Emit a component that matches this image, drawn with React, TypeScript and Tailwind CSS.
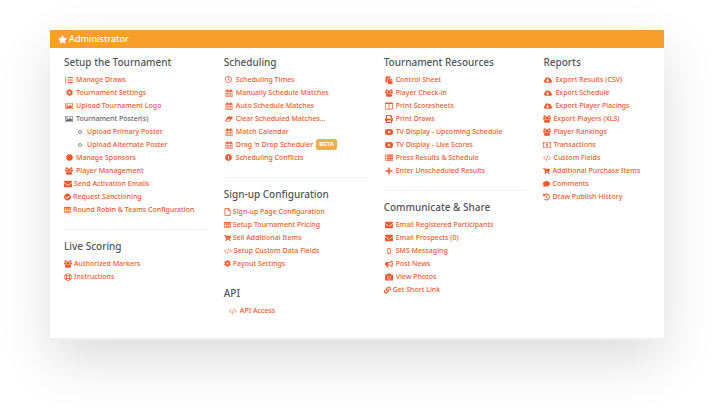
import type { ReactNode } from "react";
import {
  FaBullhorn,
  FaCamera,
  FaCertificate,
  FaCheckCircle,
  FaCloudDownloadAlt,
  FaCog,
  FaComment,
  FaEraser,
  FaExclamationCircle,
  FaHistory,
  FaLink,
  FaListOl,
  FaPaste,
  FaPlus,
  FaPrint,
  FaRegClock,
  FaRegFile,
  FaRegLifeRing,
  FaShoppingCart,
  FaStar,
} from "react-icons/fa";

function Glyph({ box, children }: { box: string; children: ReactNode }) {
  return (
    <svg viewBox={box} width="1em" height="1em" fill="currentColor" fillRule="evenodd" aria-hidden="true">
      {children}
    </svg>
  );
}

const Users = () => (
  <Glyph box="0 0 1920 1792">
    <path d="M593 896q-162 5-265 128h-134q-82 0-138-40.500t-56-118.500q0-353 124-353 6 0 43.500 21t97.500 42.500 119 21.500q67 0 133-23-5 37-5 66 0 139 81 256zM1664 1533q0 120-73 189.500t-194 69.500h-874q-121 0-194-69.500t-73-189.500q0-53 3.500-103.500t14-109 26.500-108.500 43-97.500 62-81 85.500-53.500 111.500-20q10 0 43 21.500t73 48 107 48 135 21.500 135-21.500 107-48 73-48 43-21.500q61 0 111.500 20t85.500 53.500 62 81 43 97.500 26.500 108.500 14 109 3.500 103.500zM640 256q0 106-75 181t-181 75-181-75-75-181 75-181 181-75 181 75 75 181zM1344 640q0 159-112.500 271.500t-271.500 112.500-271.500-112.500-112.500-271.500 112.500-271.500 271.500-112.500 271.500 112.500 112.500 271.500zM1920 865q0 78-56 118.500t-138 40.500h-134q-103-123-265-128 81-117 81-256 0-29-5-66 66 23 133 23 59 0 119-21.500t97.500-42.500 43.500-21q124 0 124 353zM1792 256q0 106-75 181t-181 75-181-75-75-181 75-181 181-75 181 75 75 181z" />
  </Glyph>
);

const Code = () => (
  <Glyph box="0 64 1920 1792">
    <path d="M617 1399l-50 50q-10 10-23 10t-23-10l-466-466q-10-10-10-23t10-23l466-466q10-10 23-10t23 10l50 50q10 10 10 23t-10 23l-393 393 393 393q10 10 10 23t-10 23zM1176 454l-373 1291q-4 13-15.500 19.500t-23.500 2.500l-62-17q-13-4-19.500-15.500t-2.500-24.500l373-1291q4-13 15.500-19.500t23.500-2.500l62 17q13 4 19.500 15.500t2.500 24.500zM1865 983l-466 466q-10 10-23 10t-23-10l-50-50q-10-10-10-23t10-23l393-393-393-393q-10-10-10-23t10-23l50-50q10-10 23-10t23 10l466 466q10 10 10 23t-10 23z" />
  </Glyph>
);

const Envelope = () => (
  <Glyph box="0 128 1792 1664">
    <path d="M1792 710v794q0 66-47 113t-113 47h-1472q-66 0-113-47t-47-113v-794q44 49 101 87 362 246 497 345 57 42 92.500 65.500t94.500 48 110 24.500h2q51 0 110-24.500t94.500-48 92.500-65.500q170-123 498-345 57-39 100-87zM1792 416q0 79-49 151t-122 123q-376 261-468 325-10 7-42.500 30.500t-54 38-52 32.500-57.500 27-50 9h-2q-23 0-50-9t-57.500-27-52-32.500-54-38-42.500-30.500q-91-64-262-182.500t-205-142.500q-62-42-117-115.500t-55-136.500q0-78 41.500-130t118.500-52h1472q65 0 112.500 47t47.500 113z" />
  </Glyph>
);

const Picture = () => (
  <Glyph box="0 0 16 14">
    <path d="M1 1h14l1 1v10l-1 1H1l-1-1V2zM1.200 2.200v9.600h13.600V2.200zM4 3.300a1.500 1.500 0 1 1 0 3 1.500 1.500 0 0 1 0-3zM2.300 11V9l2.300-2.300L6.200 8.300l4-4L13.700 7.800V11z" />
  </Glyph>
);

const Calendar = () => (
  <Glyph box="0 0 14 14">
    <path d="M1 2h2V.5h2V2h4V.5h2V2h2v12H1zM2 5v2h2.500V5zM5.500 5v2h3V5zM9.500 5v2H12V5zM2 8v2h2.500V8zM5.500 8v2h3V8zM9.500 8v2H12V8zM2 11v2h2.500v-2zM5.500 11v2h3v-2zM9.500 11v2H12v-2z" />
  </Glyph>
);

const Table = () => (
  <Glyph box="0 0 14 14">
    <path d="M1 1h12l1 1v10l-1 1H1l-1-1V2zM1 4v2h3.300V4zM5.300 4v2h3.400V4zM9.700 4v2H13V4zM1 7v2h3.300V7zM5.300 7v2h3.400V7zM9.700 7v2H13V7zM1 10v2h3.300v-2zM5.300 10v2h3.400v-2zM9.700 10v2H13v-2z" />
  </Glyph>
);

const Columns = () => (
  <Glyph box="0 0 14 14">
    <path d="M1 1h12l1 1v10l-1 1H1l-1-1V2zM1.200 3.500V12h5.200V3.500zM7.600 3.500V12h5.200V3.500z" />
  </Glyph>
);

const List = () => (
  <Glyph box="0 0 14 14">
    <path d="M0 1h2v2H0zM3 1h11v2H3zM0 4h2v2H0zM3 4h11v2H3zM0 7h2v2H0zM3 7h11v2H3zM0 10h2v2H0zM3 10h11v2H3z" />
  </Glyph>
);

const Video = () => (
  <Glyph box="0 0 16 14">
    <path d="M2 1.500q6-.7 12 0 2 .3 2 5.500t-2 5.500q-6 .7-12 0-2-.3-2-5.500t2-5.500zM6.300 4v6L11 7z" />
  </Glyph>
);

const Phone = () => (
  <Glyph box="0 0 14 14">
    <path d="M5 2h4l1 1v8l-1 1H5l-1-1V3zM5.200 4v6h3.600V4z" />
  </Glyph>
);

const Money = () => (
  <Glyph box="0 0 16 14">
    <path d="M0 1.500h16v11H0zM3 2.700q0 2-1.800 2v4.600q1.800 0 1.800 2h10q0-2 1.800-2V4.700q-1.800 0-1.800-2zM8 3.700q2.400 0 2.400 3.300T8 10.300 5.600 7 8 3.700zM7.500 5v3.200H7V9h2.200v-.8h-.6V5z" />
  </Glyph>
);

const Eraser = () => (
  <Glyph box="0 0 16 14">
    <path d="M6.200 2h8.600q1.400 0 .9 1.300L10.500 11q-.5 1-1.500 1H1.200Q-.2 12 .4 10.700L5 3q.4-1 1.200-1zM5 7.500L2.300 11h6.200l2.400-3.500z" />
  </Glyph>
);

const Cog = () => (
  <span className="flex items-center text-[7px]">
    <FaCog aria-hidden="true" />
  </span>
);

const Certificate = () => (
  <span className="flex items-center text-[7px]">
    <FaCertificate aria-hidden="true" />
  </span>
);

const Clock = () => (
  <span className="flex items-center text-[7px]">
    <FaRegClock aria-hidden="true" />
  </span>
);

const Alert = () => (
  <span className="flex items-center text-[7px]">
    <FaExclamationCircle aria-hidden="true" />
  </span>
);

type Slot = "fixed" | "wide" | "narrow";

const slotWidth: Record<Slot, string> = {
  fixed: "w-[10px]",
  wide: "w-[8px]",
  narrow: "w-[7px]",
};

type Entry = {
  label: string;
  icon: ReactNode;
  slot?: Slot;
  badge?: string;
  children?: string[];
};

function Icon({ slot = "fixed", children }: { slot?: Slot; children: ReactNode }) {
  return <span className={`${slotWidth[slot]} flex shrink-0 justify-center text-[8px]`}>{children}</span>;
}

function Row({ entry }: { entry: Entry }) {
  if (entry.children) {
    return (
      <li>
        <div className="flex h-[13px] items-center gap-[2px] text-[#5b626a]">
          <Icon>{entry.icon}</Icon>
          {entry.label}
        </div>
        <ul>
          {entry.children.map((label) => (
            <li key={label} className="flex h-[13px] items-center gap-[5px] pl-[14px]">
              <span className="size-[4px] rounded-full border border-[#8b9096]" />
              <a href="#">{label}</a>
            </li>
          ))}
        </ul>
      </li>
    );
  }
  return (
    <li className="flex h-[13px] items-center gap-[3px]">
      <a href="#" className="flex items-center gap-[2px]">
        <Icon slot={entry.slot}>{entry.icon}</Icon>
        {entry.label}
      </a>
      {entry.badge && (
        <span className="rounded-xs bg-[#f0ad4e] px-[3px] text-[6px] leading-[11px] font-bold text-white">
          {entry.badge}
        </span>
      )}
    </li>
  );
}

function Section({ title, entries, inset }: { title: string; entries: Entry[]; inset?: boolean }) {
  return (
    <section>
      <h2 className="text-[10px] leading-[14px] font-medium text-[#4f565e]">{title}</h2>
      <ul className={inset ? "mt-1 pl-1" : "mt-1"}>
        {entries.map((entry) => (
          <Row key={entry.label} entry={entry} />
        ))}
      </ul>
    </section>
  );
}

const Divider = () => <hr className="mt-[13px] mb-[9px] border-[#f2f2f2]" />;

const setup: Entry[] = [
  { label: "Manage Draws", icon: <FaListOl /> },
  { label: "Tournament Settings", icon: <Cog /> },
  { label: "Upload Tournament Logo", icon: <Picture /> },
  { label: "Tournament Poster(s)", icon: <Picture />, children: ["Upload Primary Poster", "Upload Alternate Poster"] },
  { label: "Manage Sponsors", icon: <Certificate /> },
  { label: "Player Management", icon: <Users /> },
  { label: "Send Activation Emails", icon: <Envelope />, slot: "wide" },
  { label: "Request Sanctioning", icon: <FaCheckCircle />, slot: "narrow" },
  { label: "Round Robin & Teams Configuration", icon: <Table />, slot: "narrow" },
];

const liveScoring: Entry[] = [
  { label: "Authorized Markers", icon: <Users />, slot: "wide" },
  { label: "Instructions", icon: <FaRegLifeRing />, slot: "wide" },
];

const scheduling: Entry[] = [
  { label: "Scheduling Times", icon: <Clock /> },
  { label: "Manually Schedule Matches", icon: <Calendar /> },
  { label: "Auto Schedule Matches", icon: <Calendar /> },
  { label: "Clear Scheduled Matches...", icon: <Eraser /> },
  { label: "Match Calendar", icon: <Calendar /> },
  { label: "Drag 'n Drop Scheduler", icon: <Calendar />, badge: "BETA" },
  { label: "Scheduling Conflicts", icon: <Alert /> },
];

const signUp: Entry[] = [
  { label: "Sign-up Page Configuration", icon: <FaRegFile />, slot: "narrow" },
  { label: "Setup Tournament Pricing", icon: <Table />, slot: "narrow" },
  { label: "Sell Additional Items", icon: <FaShoppingCart />, slot: "narrow" },
  { label: "Setup Custom Data Fields", icon: <Code />, slot: "wide" },
  { label: "Payout Settings", icon: <Cog />, slot: "narrow" },
];

const api: Entry[] = [{ label: "API Access", icon: <Code /> }];

const resources: Entry[] = [
  { label: "Control Sheet", icon: <FaPaste /> },
  { label: "Player Check-in", icon: <Users /> },
  { label: "Print Scoresheets", icon: <Columns /> },
  { label: "Print Draws", icon: <FaPrint /> },
  { label: "TV Display - Upcoming Schedule", icon: <Video /> },
  { label: "TV Display - Live Scores", icon: <Video /> },
  { label: "Press Results & Schedule", icon: <List /> },
  { label: "Enter Unscheduled Results", icon: <FaPlus /> },
];

const communicate: Entry[] = [
  { label: "Email Registered Participants", icon: <Envelope /> },
  { label: "Email Prospects (0)", icon: <Envelope /> },
  { label: "SMS Messaging", icon: <Phone /> },
  { label: "Post News", icon: <FaBullhorn /> },
  { label: "View Photos", icon: <FaCamera /> },
  { label: "Get Short Link", icon: <FaLink />, slot: "narrow" },
];

const reports: Entry[] = [
  { label: "Export Results (CSV)", icon: <FaCloudDownloadAlt /> },
  { label: "Export Schedule", icon: <FaCloudDownloadAlt /> },
  { label: "Export Player Placings", icon: <FaCloudDownloadAlt /> },
  { label: "Export Players (XLS)", icon: <Users />, slot: "wide" },
  { label: "Player Rankings", icon: <Users />, slot: "wide" },
  { label: "Transactions", icon: <Money />, slot: "wide" },
  { label: "Custom Fields", icon: <Code />, slot: "wide" },
  { label: "Additional Purchase Items", icon: <FaShoppingCart />, slot: "narrow" },
  { label: "Comments", icon: <FaComment />, slot: "narrow" },
  { label: "Draw Publish History", icon: <FaHistory />, slot: "narrow" },
];

export default function App() {
  return (
    <div className="min-h-screen bg-white px-[50px] pt-[30px] pb-[70px] font-['Noto_Sans','Open_Sans',sans-serif]">
      <main className="border-b-2 border-[#efefef] bg-white shadow-[0_20px_50px_rgba(0,0,0,0.14)]">
        <h1 className="flex h-[18px] items-center gap-[2px] bg-[#f99d2b] px-2 text-[9px] font-medium text-white">
          <FaStar aria-hidden="true" />
          Administrator
        </h1>
        <div className="grid grid-cols-[3fr_3fr_3fr_2fr] px-[14px] pt-[7px] pb-[21px] text-[7px] leading-[13px] font-medium whitespace-nowrap text-[#f4592b]">
          <div className="pr-4">
            <Section title="Setup the Tournament" entries={setup} />
            <Divider />
            <Section title="Live Scoring" entries={liveScoring} />
          </div>
          <div className="pr-4">
            <Section title="Scheduling" entries={scheduling} />
            <Divider />
            <Section title="Sign-up Configuration" entries={signUp} />
            <div className="mt-4">
              <Section title="API" entries={api} inset />
            </div>
          </div>
          <div className="pr-4">
            <Section title="Tournament Resources" entries={resources} />
            <Divider />
            <Section title="Communicate & Share" entries={communicate} />
          </div>
          <div>
            <Section title="Reports" entries={reports} />
          </div>
        </div>
      </main>
    </div>
  );
}
